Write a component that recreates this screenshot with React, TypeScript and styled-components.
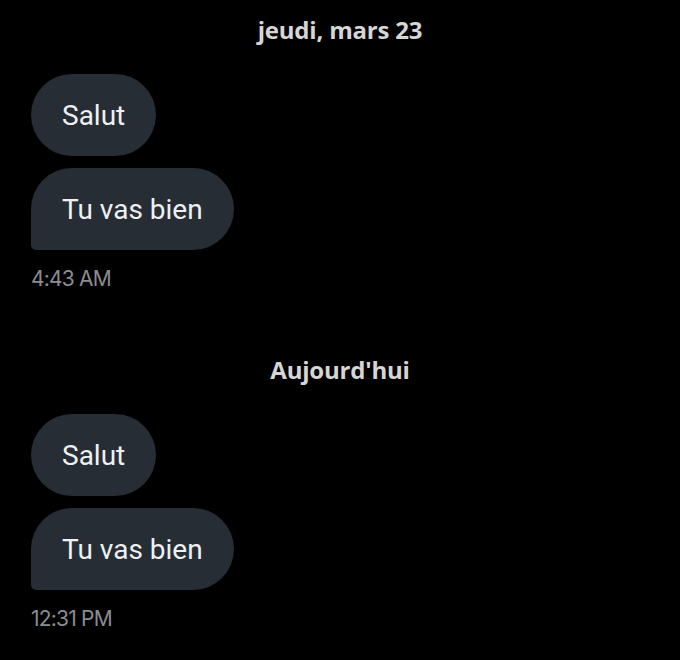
import React from 'react';
import styled, { createGlobalStyle } from 'styled-components';

const GlobalStyle = createGlobalStyle`
  html, body {
    margin: 0;
    padding: 0;
    background: #000;
  }
  body {
    font-family: Roboto, "Noto Sans", sans-serif;
  }
`

const Thread = styled.div`
  width: 680px;
  min-height: 660px;
  background: #000;
  padding: 0 31px;
  box-sizing: border-box;
  display: flex;
  flex-direction: column;
  gap: 48px;
`

const Day = styled.section`
  display: flex;
  flex-direction: column;
`

const DayLabel = styled.div`
  height: 60px;
  line-height: 60px;
  text-align: center;
  font-family: "Open Sans", Roboto, sans-serif;
  font-weight: 700;
  font-size: 24px;
  color: #d6d6d6;
  letter-spacing: -0.2px;
`

const Messages = styled.div`
  margin-top: 14px;
  display: flex;
  flex-direction: column;
  align-items: flex-start;
  gap: 12px;
`

const Bubble = styled.div<{ $last?: boolean }>`
  height: 82px;
  box-sizing: border-box;
  padding: 0 31px;
  display: flex;
  align-items: center;
  background: #262d34;
  color: #eef0f2;
  font-size: 28px;
  border-radius: ${p => (p.$last ? '41px 41px 41px 5px' : '41px')};
`

const Time = styled.div`
  margin-top: 16px;
  line-height: 26px;
  font-family: Inter, "Liberation Sans", sans-serif;
  font-size: 21px;
  letter-spacing: -0.8px;
  color: #8a8d90;
`

interface Conversation {
  day: string;
  time: string;
  messages: string[];
}

const days: Conversation[] = [
  { day: 'jeudi, mars 23', time: '4:43 AM', messages: ['Salut', 'Tu vas bien'] },
  { day: "Aujourd'hui", time: '12:31 PM', messages: ['Salut', 'Tu vas bien'] },
];

const App = () => {
  return (
    <>
      <GlobalStyle />
      <Thread>
        {days.map(d => (
          <Day key={d.day}>
            <DayLabel>{d.day}</DayLabel>
            <Messages>
              {d.messages.map((m, i) => (
                <Bubble key={i} $last={i === d.messages.length - 1}>{m}</Bubble>
              ))}
            </Messages>
            <Time>{d.time}</Time>
          </Day>
        ))}
      </Thread>
    </>
  );
};

export default App;
